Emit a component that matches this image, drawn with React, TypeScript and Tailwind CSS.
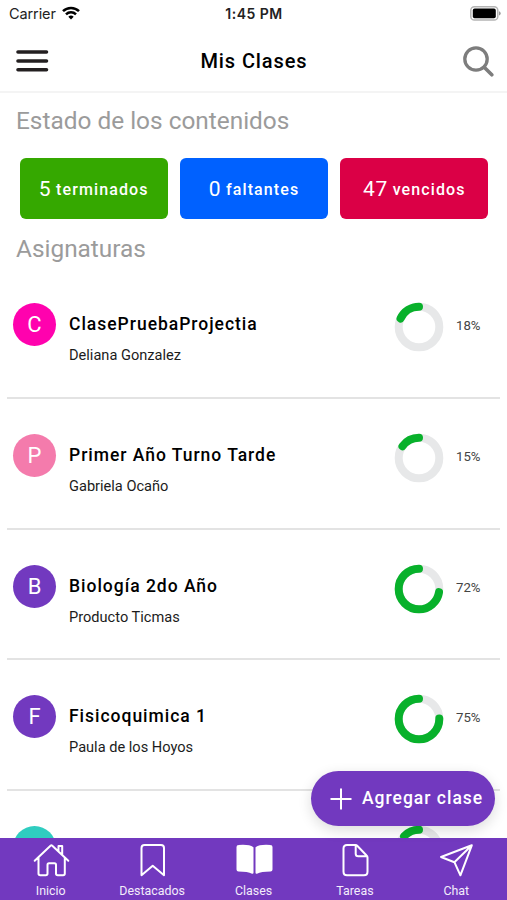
import type { ReactNode } from 'react';

type Subject = {
  letter: string;
  color: string;
  title: string;
  teacher: string;
  percent: number;
};

const stats = [
  { value: 5, label: 'terminados', color: 'bg-[#35a800]' },
  { value: 0, label: 'faltantes', color: 'bg-[#0061ff]' },
  { value: 47, label: 'vencidos', color: 'bg-[#db0046]' },
];

const subjects: Subject[] = [
  { letter: 'C', color: 'bg-[#ff02ae]', title: 'ClasePruebaProjectia', teacher: 'Deliana Gonzalez', percent: 18 },
  { letter: 'P', color: 'bg-[#f47bac]', title: 'Primer Año Turno Tarde', teacher: 'Gabriela Ocaño', percent: 15 },
  { letter: 'B', color: 'bg-[#7239bf]', title: 'Biología 2do Año', teacher: 'Producto Ticmas', percent: 72 },
  { letter: 'F', color: 'bg-[#7239bf]', title: 'Fisicoquimica 1', teacher: 'Paula de los Hoyos', percent: 75 },
  { letter: '', color: 'bg-[#2fcdc0]', title: '', teacher: '', percent: 13 },
];

function StatusBar() {
  return (
    <div className="grid h-[30px] grid-cols-3 items-start px-[9px] pt-1 leading-5 text-[#222]">
      <div className="flex items-center gap-[6px] font-['Inter','Liberation_Sans',sans-serif] text-[14.5px] tracking-[-0.1px]">
        Carrier
        <svg width="18" height="14" viewBox="0 0 18 14" className="-mt-[3px]" fill="none" stroke="#000" strokeWidth="2.5">
          <path d="M1 5.2a11.3 11.3 0 0 1 16 0" />
          <path d="M4 8.4a7.1 7.1 0 0 1 10 0" />
          <path d="M6.3 10.8a3.8 3.8 0 0 1 5.4 0L9 13.6z" fill="#000" stroke="none" />
        </svg>
      </div>
      <div className="pl-px text-center font-['Inter','Liberation_Sans',sans-serif] text-[14px] font-semibold tracking-[0.5px]">
        1:45 PM
      </div>
      <svg width="31" height="15" viewBox="0 0 31 15" className="mt-[1.5px] -mr-[3px] justify-self-end">
        <rect x="0.8" y="0.8" width="27" height="13.2" rx="3.6" fill="#fff" stroke="#b4b4b4" strokeWidth="1.5" />
        <rect x="2.8" y="2.6" width="23" height="9.6" rx="1.8" fill="#000" />
        <path d="M29 5.2q1.7.6 1.7 2.2T29 9.6z" fill="#999" />
      </svg>
    </div>
  );
}

function Header() {
  return (
    <header className="flex h-[63px] items-center justify-between border-b-2 border-[#f4f4f4] pt-px pr-[13px] pl-4">
      <svg width="33" height="22" viewBox="0 0 33 22" stroke="#231f20" strokeWidth="3.6" strokeLinecap="round">
        <path d="M2 2h28.5M2 11h28.5M2 19.8h28.5" />
      </svg>
      <h1 className="mr-[4px] text-[20px] font-[480] tracking-[0.9px] text-black">Mis Clases</h1>
      <svg width="31" height="31" viewBox="0 0 31 31" fill="none" stroke="#7d7d7d" strokeWidth="3.3" strokeLinecap="round">
        <circle cx="13" cy="13" r="11.2" />
        <path d="M21.2 21.2l7.6 7.6" strokeWidth="3.6" />
      </svg>
    </header>
  );
}

function Ring({ percent }: { percent: number }) {
  const length = 2 * Math.PI * 20.3;
  return (
    <svg width="50" height="50" viewBox="0 0 50 50" fill="none" strokeWidth="8">
      <circle cx="25" cy="25" r="20.3" stroke="#e7e8e9" />
      <circle
        cx="25"
        cy="25"
        r="20.3"
        stroke="#08b12b"
        strokeLinecap="round"
        strokeDasharray={`${(length * percent) / 100} ${length}`}
        transform="matrix(0 -1 -1 0 50 50)"
      />
    </svg>
  );
}

function SubjectRow({ letter, color, title, teacher, percent }: Subject) {
  return (
    <li className="mx-[7px] flex h-[130.8px] shrink-0 items-start border-b-2 border-[#e3e3e3] pr-[19px] pl-[6px]">
      <div className={`mt-[35px] flex h-[43px] w-[43px] items-center justify-center rounded-full text-[22px] text-white ${color}`}>
        {letter}
      </div>
      <div className="mt-[44px] ml-[13px] flex-1">
        <div className="text-[17.5px] leading-6 font-[480] tracking-[0.98px] text-black">{title}</div>
        <div className="mt-[9px] text-[14.6px] leading-5 text-[#1c1c1c]">{teacher}</div>
      </div>
      <div className="mt-[34px] flex items-center gap-3">
        <Ring percent={percent} />
        <span className="-mt-[2px] w-[25px] text-[13.2px] text-[#444]">{title && `${percent}%`}</span>
      </div>
    </li>
  );
}

function Tab({ label, children }: { label: string; children: ReactNode }) {
  return (
    <a className="flex flex-1 flex-col items-center pt-[5px]">
      <svg width="38" height="36" viewBox="0 0 38 36" fill="none" stroke="#fff" strokeWidth="2" strokeLinejoin="round" strokeLinecap="round">
        {children}
      </svg>
      <span className="mt-[4px] text-[12.4px] leading-4 text-[#f3ecfb]">{label}</span>
    </a>
  );
}

function TabBar() {
  return (
    <nav className="flex h-[62px] shrink-0 bg-[#7239bf]">
      <Tab label="Inicio">
        <path d="M2.7 17.7L18.5 2.7q.9-.8 1.8 0L36.3 17.7M6.500 14.500v16q0 1.700 1.700 1.700h5.600q1.700 0 1.700-1.700v-8.700q0-1.500 1.500-1.500h5.500q1.500 0 1.500 1.500v8.700q0 1.700 1.700 1.700h5.400q1.700 0 1.700-1.700v-16M26.500 8V3h3.700v8.500" />
      </Tab>
      <Tab label="Destacados">
        <path d="M11.5 2H28q3 0 3 3v27.2L19.7 22.8 8.5 32.2V5q0-3 3-3z" />
      </Tab>
      <Tab label="Clases">
        <path d="M3.5 3Q14 2.2 17.500 4.800v25Q13 27.500 3.500 27.500q-1 0-1-1V4q0-1 1-1z" fill="#fff" />
        <path d="M35.5 3Q25 2.2 21.500 4.800v25Q26 27.500 35.500 27.500q1 0 1-1V4q0-1-1-1z" fill="#fff" />
      </Tab>
      <Tab label="Tareas">
        <path d="M11 2h8.5q1 0 1.7.7l9.4 9.8q.9.8.9 2v14.2q0 3.5-3.5 3.500H11q-3.500 0-3.500-3.500V5.500Q7.500 2 11 2zM19.700 2.500v8.300q0 2.500 2.500 2.500h8.300" />
      </Tab>
      <Tab label="Chat">
        <path d="M34.8 2.3L4 14l13.4 5.2L23.4 32.3zM34.8 2.3L17.4 19.2" />
      </Tab>
    </nav>
  );
}

export default function App() {
  return (
    <div className="relative flex h-[900px] w-[507px] flex-col overflow-hidden bg-white font-['Roboto','Liberation_Sans',sans-serif]">
      <StatusBar />
      <Header />
      <main className="flex min-h-0 flex-1 flex-col overflow-hidden">
        <h2 className="mt-[13px] ml-4 text-[24.4px] leading-[30px] text-[#9b9b9b]">Estado de los contenidos</h2>
        <div className="mt-[22px] mr-[18.5px] ml-[19.5px] grid shrink-0 grid-cols-3 gap-3">
          {stats.map((stat) => (
            <div
              key={stat.label}
              className={`flex h-[61px] items-center justify-center gap-[5px] rounded-[6px] pt-[2px] text-white ${stat.color}`}
            >
              <span className="text-[21px] tracking-[0.5px]">{stat.value}</span>
              <span className="text-[16px] font-[480] tracking-[1.1px]">{stat.label}</span>
            </div>
          ))}
        </div>
        <h2 className="mt-[15px] ml-4 text-[24.4px] leading-[30px] text-[#9b9b9b]">Asignaturas</h2>
        <ul className="mt-[4px]">
          {subjects.map((subject, i) => (
            <SubjectRow key={i} {...subject} />
          ))}
        </ul>
      </main>
      <TabBar />
      <button className="absolute right-[12px] bottom-[74px] flex h-[55px] w-[184px] items-center rounded-full bg-[#7239bf] pl-[19px] text-white shadow-[0_4px_14px_rgba(0,0,0,0.14)]">
        <svg width="22" height="22" viewBox="0 0 22 22" stroke="#fff" strokeWidth="2">
          <path d="M11 .5v21M.5 11h21" />
        </svg>
        <span className="ml-[10px] text-[17.5px] font-[480] tracking-[1px] whitespace-nowrap">Agregar clase</span>
      </button>
    </div>
  );
}
